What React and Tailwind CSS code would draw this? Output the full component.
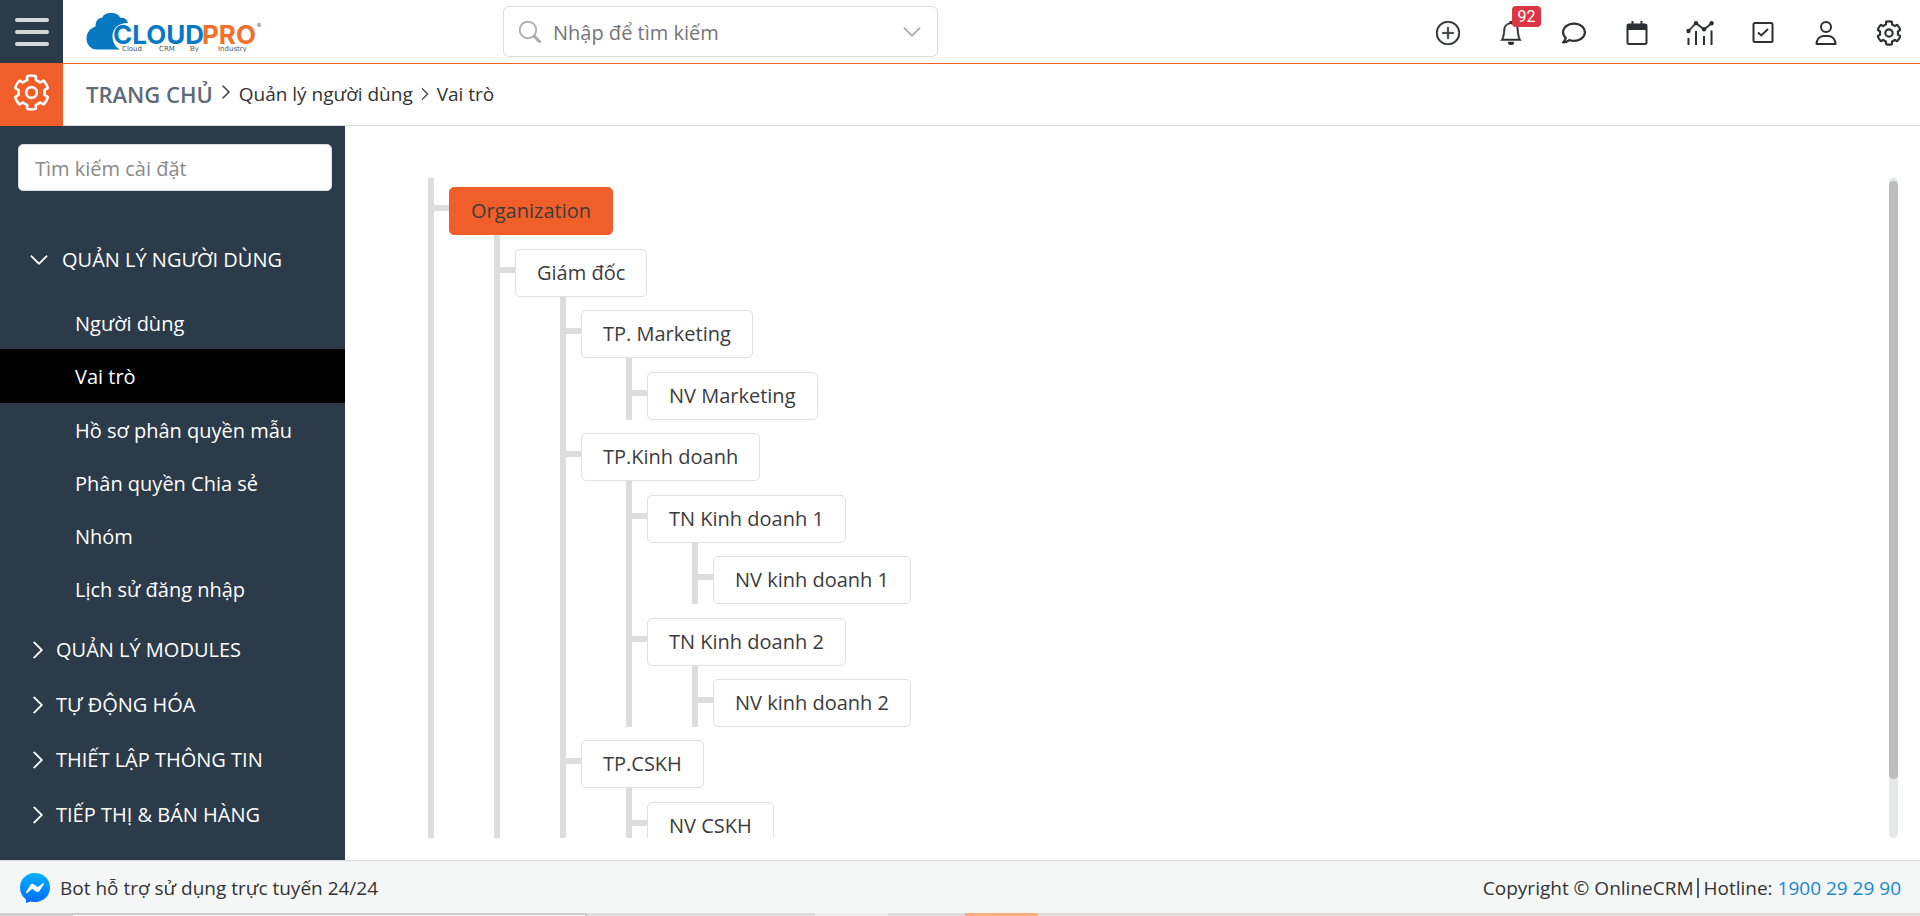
import React from 'react';
import { BsPlusCircle, BsBell, BsSearch, BsChevronDown, BsChevronRight } from 'react-icons/bs';
import { FaRegComment } from 'react-icons/fa';

const COG_RIM =
  'M487.4 315.7l-42.6-24.6c4.3-23.2 4.3-47 0-70.2l42.6-24.6c4.9-2.8 7.1-8.6 5.5-14-11.1-35.6-30-67.8-54.7-94.6-3.8-4.1-10-5.1-14.8-2.3L380.8 110c-17.9-15.4-38.5-27.3-60.8-35.1V25.8c0-5.6-3.9-10.5-9.4-11.7-36.7-8.2-74.3-7.8-109.2 0-5.5 1.2-9.4 6.1-9.4 11.7V75c-22.2 7.9-42.8 19.8-60.8 35.1L88.7 85.5c-4.9-2.8-11-1.9-14.8 2.3-24.7 26.7-43.6 58.9-54.7 94.6-1.7 5.4.6 11.2 5.5 14L67.3 221c-4.3 23.2-4.3 47 0 70.2l-42.6 24.6c-4.9 2.8-7.1 8.6-5.5 14 11.1 35.6 30 67.8 54.7 94.6 3.8 4.1 10 5.1 14.8 2.3l42.6-24.6c17.9 15.4 38.5 27.3 60.8 35.1v49.2c0 5.6 3.9 10.5 9.4 11.7 36.7 8.2 74.3 7.8 109.2 0 5.5-1.2 9.4-6.1 9.4-11.7v-49.2c22.2-7.9 42.8-19.8 60.8-35.1l42.6 24.6c4.9 2.8 11 1.9 14.8-2.3 24.7-26.7 43.6-58.9 54.7-94.6 1.5-5.5-.7-11.3-5.6-14.1z';

function Cog({ className, stroke }) {
  return (
    <svg viewBox="0 0 512 512" className={className} fill="none" stroke="currentColor" strokeWidth={stroke} strokeLinejoin="round" aria-hidden="true" overflow="visible">
      <path d={COG_RIM} />
      <circle cx="256" cy="256" r="78" />
    </svg>
  );
}

function CalendarIcon() {
  return (
    <svg viewBox="0 0 24 24" className="size-6" fill="none" stroke="currentColor" strokeWidth="2" aria-hidden="true">
      <rect x="2.5" y="3.5" width="19" height="19.5" rx="1.5" />
      <path d="M2 3h20v6H2z" fill="currentColor" stroke="none" />
      <path d="M7.500 0v4M16.500 0v4" />
    </svg>
  );
}

function ChartIcon() {
  return (
    <svg viewBox="0 0 28 24" className="h-6 w-7" fill="none" stroke="currentColor" strokeWidth="1.800" aria-hidden="true">
      <path d="M2.500 10 10 2l8 6.500L26 2" />
      <path d="M2.500 17v7M10 10v14M18 15v9M25.500 9.500v14.500" strokeWidth="2" />
      <g fill="currentColor" stroke="none">
        <circle cx="2.500" cy="10" r="2.200" />
        <circle cx="10" cy="2.200" r="2.200" />
        <circle cx="18" cy="8.200" r="2.200" />
        <circle cx="25.600" cy="2.200" r="2.200" />
      </g>
    </svg>
  );
}

function CheckSquareIcon() {
  return (
    <svg viewBox="0 0 24 24" className="size-6" fill="none" stroke="currentColor" strokeWidth="2" aria-hidden="true">
      <rect x="2.500" y="2" width="19" height="19" rx="1.500" />
      <path d="m7 11.500 3.300 3L17 8" />
    </svg>
  );
}

function UserIcon() {
  return (
    <svg viewBox="0 0 24 24" className="size-6" fill="none" stroke="currentColor" strokeWidth="2" strokeLinejoin="round" aria-hidden="true">
      <circle cx="12" cy="6" r="5" />
      <path d="M2.500 23c0-4.500 3-8 7-8h5c4 0 7 3.500 7 8z" />
    </svg>
  );
}

function Logo() {
  return (
    <a href="#" aria-label="CloudPro" className="block">
      <svg viewBox="0 0 176 40" className="h-10 w-44" aria-hidden="true">
        <path
          d="M11 37.500C4.500 37.500.5 32.500.5 26.500c0-6 4-10.500 9-12C9.500 8 13 5.500 16 6 17 3 20 1 25 1c5 0 8 2 9.500 5 3-.7 6.500 1 7.500 5-8.500-.3-15.500 5-15.500 13.200 0 6 3 11 7.500 13.300z"
          fill="#0679c3"
        />
        <text x="27" y="32" fontFamily="Inter, sans-serif" fontWeight="700" fontSize="26" fill="#0679c3">CLOUD</text>
        <text x="116" y="32" fontFamily="Inter, sans-serif" fontWeight="700" fontSize="26" fill="#f46f2c">PRO</text>
        <text x="171" y="16" fontFamily="Inter, sans-serif" fontSize="6" fill="#666">®</text>
        <g fontFamily="DejaVu Sans, sans-serif" fontSize="7" fill="#555">
          <text x="36" y="38.500">Cloud</text>
          <text x="73" y="38.500">CRM</text>
          <text x="104" y="38.500">By</text>
          <text x="132" y="38.500">Industry</text>
        </g>
      </svg>
    </a>
  );
}

function MessengerIcon() {
  return (
    <svg viewBox="0 0 30 30" className="size-[30px]" aria-hidden="true">
      <defs>
        <linearGradient id="msg" x1="0" y1="0" x2="0" y2="1">
          <stop offset="0" stopColor="#00b2ff" />
          <stop offset="1" stopColor="#006aff" />
        </linearGradient>
      </defs>
      <path d="M15 0c8.500 0 15 6.200 15 14.600S23.500 29 15 29c-1.500 0-3-.2-4.400-.6L6 30v-3.600C2 23.700 0 19.500 0 14.600 0 6.200 6.500 0 15 0z" fill="url(#msg)" />
      <path d="m6 19 4.500-7.200c.7-1.100 2.200-1.400 3.200-.6l3.500 2.600c.3.200.8.200 1.100 0l4.700-3.600c.6-.5 1.400.3 1 .9l-4.500 7c-.7 1.200-2.200 1.500-3.200.7l-3.500-2.600c-.3-.2-.8-.2-1.100 0L7 19.900c-.6.500-1.400-.200-1-.9z" fill="#fff" />
    </svg>
  );
}

const ACTIONS = [
  { label: 'Thêm nhanh', icon: <BsPlusCircle className="size-6" strokeWidth="0.3" /> },
  { label: 'Thông báo', icon: <BsBell className="size-6" strokeWidth="0.3" />, badge: '92' },
  { label: 'Tin nhắn', icon: <FaRegComment className="size-6" /> },
  { label: 'Lịch', icon: <CalendarIcon /> },
  { label: 'Báo cáo', icon: <ChartIcon /> },
  { label: 'Công việc', icon: <CheckSquareIcon /> },
  { label: 'Tài khoản', icon: <UserIcon /> },
  { label: 'Cài đặt', icon: <Cog className="size-6" stroke="46" /> },
];

const USER_LINKS = ['Người dùng', 'Vai trò', 'Hồ sơ phân quyền mẫu', 'Phân quyền Chia sẻ', 'Nhóm', 'Lịch sử đăng nhập'];
const SECTIONS = ['QUẢN LÝ MODULES', 'TỰ ĐỘNG HÓA', 'THIẾT LẬP THÔNG TIN', 'TIẾP THỊ & BÁN HÀNG'];

const ROLES = {
  name: 'Organization',
  children: [
    {
      name: 'Giám đốc',
      children: [
        { name: 'TP. Marketing', children: [{ name: 'NV Marketing' }] },
        {
          name: 'TP.Kinh doanh',
          children: [
            { name: 'TN Kinh doanh 1', children: [{ name: 'NV kinh doanh 1' }] },
            { name: 'TN Kinh doanh 2', children: [{ name: 'NV kinh doanh 2' }] },
          ],
        },
        { name: 'TP.CSKH', children: [{ name: 'NV CSKH' }] },
      ],
    },
  ],
};

function RoleNode({ role, depth }) {
  const spacing = depth === 0 ? 'pt-[9px]' : depth % 2 ? 'pt-[14px]' : 'pt-[13px]';
  const look = depth === 0 ? 'border-[#f05f29] bg-[#f05f29]' : 'border-[#e1e1e1] bg-white';
  return (
    <li className={spacing}>
      <div className="flex items-start">
        <span className="mt-[18px] h-1.5 w-[15px] bg-[#ddd]" />
        <button type="button" className={`h-12 whitespace-nowrap rounded-[5px] border px-[21px] text-[#3c3c3c] ${look}`}>
          {role.name}
        </button>
      </div>
      {role.children && (
        <ul className="ml-[60px] border-l-[6px] border-[#ddd]">
          {role.children.map((child) => (
            <RoleNode key={child.name} role={child} depth={depth + 1} />
          ))}
        </ul>
      )}
    </li>
  );
}

export default function App() {
  return (
    <div className="flex h-screen flex-col overflow-hidden bg-white font-['Open_Sans','Noto_Sans',sans-serif] text-[20px] leading-7 text-[#333]">
      <header className="flex h-16 shrink-0">
        <button type="button" aria-label="Menu" className="flex h-[63px] w-[63px] shrink-0 flex-col items-center justify-center gap-2 bg-[#2c3b49]">
          <span className="h-1 w-[34px] rounded-full bg-[#d5d8db]" />
          <span className="h-1 w-[34px] rounded-full bg-[#d5d8db]" />
          <span className="h-1 w-[34px] rounded-full bg-[#d5d8db]" />
        </button>
        <div className="flex flex-1 items-center border-b border-[#f05f29]">
          <div className="w-[440px] pl-[23px]">
            <Logo />
          </div>
          <label className="flex h-[51px] w-[435px] items-center rounded-md border border-[#ddd] pl-[15px] pr-[15px]">
            <BsSearch className="size-[22px] shrink-0 text-[#a9a9a9]" strokeWidth="0.3" />
            <input type="text" aria-label="Tìm kiếm" placeholder="Nhập để tìm kiếm" className="ml-3 min-w-0 flex-1 bg-transparent pt-0.5 outline-none placeholder:text-[#757575]" />
            <BsChevronDown className="size-5 shrink-0 text-[#a9a9a9]" strokeWidth="0.5" />
          </label>
          <nav className="ml-auto flex">
            {ACTIONS.map((action) => (
              <button key={action.label} type="button" aria-label={action.label} className="relative flex h-[63px] w-[63px] items-center justify-center pt-0.5 text-[#2d2f33]">
                {action.icon}
                {action.badge && (
                  <span className="absolute left-[33px] top-1.5 flex h-[21px] w-[29px] items-center justify-center rounded bg-[#dc3545] font-['Roboto',sans-serif] text-[16px] leading-5 text-white">
                    {action.badge}
                  </span>
                )}
              </button>
            ))}
          </nav>
        </div>
      </header>

      <div className="-mt-px flex h-[63px] shrink-0">
        <div className="flex w-[63px] shrink-0 items-center justify-center bg-[#f05f29] pb-1 text-white">
          <Cog className="size-[35px]" stroke="38" />
        </div>
        <nav aria-label="Breadcrumb" className="flex flex-1 items-center border-b border-[#ddd] pl-[23px] text-[19px]">
          <a href="#" className="text-[22px] font-semibold text-[#5d6b79]">TRANG CHỦ</a>
          <BsChevronRight className="mx-[5px] mb-1 size-4" strokeWidth="0.6" />
          <a href="#">Quản lý người dùng</a>
          <BsChevronRight className="mx-[5px] size-3.5" strokeWidth="0.6" />
          <span>Vai trò</span>
        </nav>
      </div>

      <div className="flex min-h-0 flex-1">
        <aside className="w-[345px] shrink-0 overflow-hidden bg-[#2c3b49] text-white">
          <div className="px-[18px] pt-[18px]">
            <input type="text" aria-label="Tìm kiếm cài đặt" placeholder="Tìm kiếm cài đặt" className="h-[47px] w-[314px] rounded-[5px] border border-[#ddd] bg-white px-4 pt-0.5 outline-none placeholder:text-[#8a8a8a]" />
          </div>
          <nav className="mt-[41px]">
            <button type="button" className="flex h-[55px] w-full items-center gap-[13px] pl-[29px]">
              <BsChevronDown className="size-5" strokeWidth="0.6" />
              QUẢN LÝ NGƯỜI DÙNG
            </button>
            <ul className="mb-[7px] mt-[9px]">
              {USER_LINKS.map((link) => (
                <li key={link}>
                  <a href="#" className={`flex items-center pl-[75px] pt-0.5 ${link === 'Vai trò' ? 'h-[54px] bg-black' : 'h-[53px]'}`}>
                    {link}
                  </a>
                </li>
              ))}
            </ul>
            {SECTIONS.map((section) => (
              <button key={section} type="button" className="flex h-[55px] w-full items-center gap-2 pl-[28px]">
                <BsChevronRight className="size-5" strokeWidth="0.6" />
                {section}
              </button>
            ))}
          </nav>
        </aside>

        <main className="flex min-w-0 flex-1 pb-[22px] pl-[83px] pr-[22px] pt-[52px]">
          <div className="min-w-0 flex-1 overflow-hidden">
            <ul className="border-l-[6px] border-[#ddd]">
              <RoleNode role={ROLES} depth={0} />
            </ul>
          </div>
          <div className="flex w-[9px] flex-col rounded-full bg-[#e5e8e8] py-[3px]">
            <div className="h-[91.5%] rounded-full bg-[#bdbdbd]" />
          </div>
        </main>
      </div>

      <footer className="flex h-[53px] shrink-0 items-center justify-between border-t border-[#d8dadb] bg-[#f5f7f7] pl-5 pr-[19px] pt-0.5 text-[19px]">
        <a href="#" className="flex items-center gap-[10px]">
          <MessengerIcon />
          Bot hỗ trợ sử dụng trực tuyến 24/24
        </a>
        <p className="flex items-center">
          Copyright © OnlineCRM
          <span className="mx-1 h-5 w-0.5 bg-[#41627a]" />
          <span className="whitespace-pre">Hotline: </span>
          <a href="#" className="text-[#1887cf]">1900 29 29 90</a>
        </p>
      </footer>
      <div className="flex h-[3px] shrink-0 bg-[#dfdada]" aria-hidden="true">
        <span className="w-[73px] bg-[#d2d2d2]" />
        <span className="w-[514px] border-r-2 border-t-2 border-[#cacaca] bg-white" />
        <span className="w-[228px] bg-[#dcdcdc]" />
        <span className="w-[73px] bg-[#f0f0f0]" />
        <span className="w-[77px] bg-[#dcdcdc]" />
        <span className="w-[73px] bg-[#f9ae7d]" />
      </div>
    </div>
  );
}
